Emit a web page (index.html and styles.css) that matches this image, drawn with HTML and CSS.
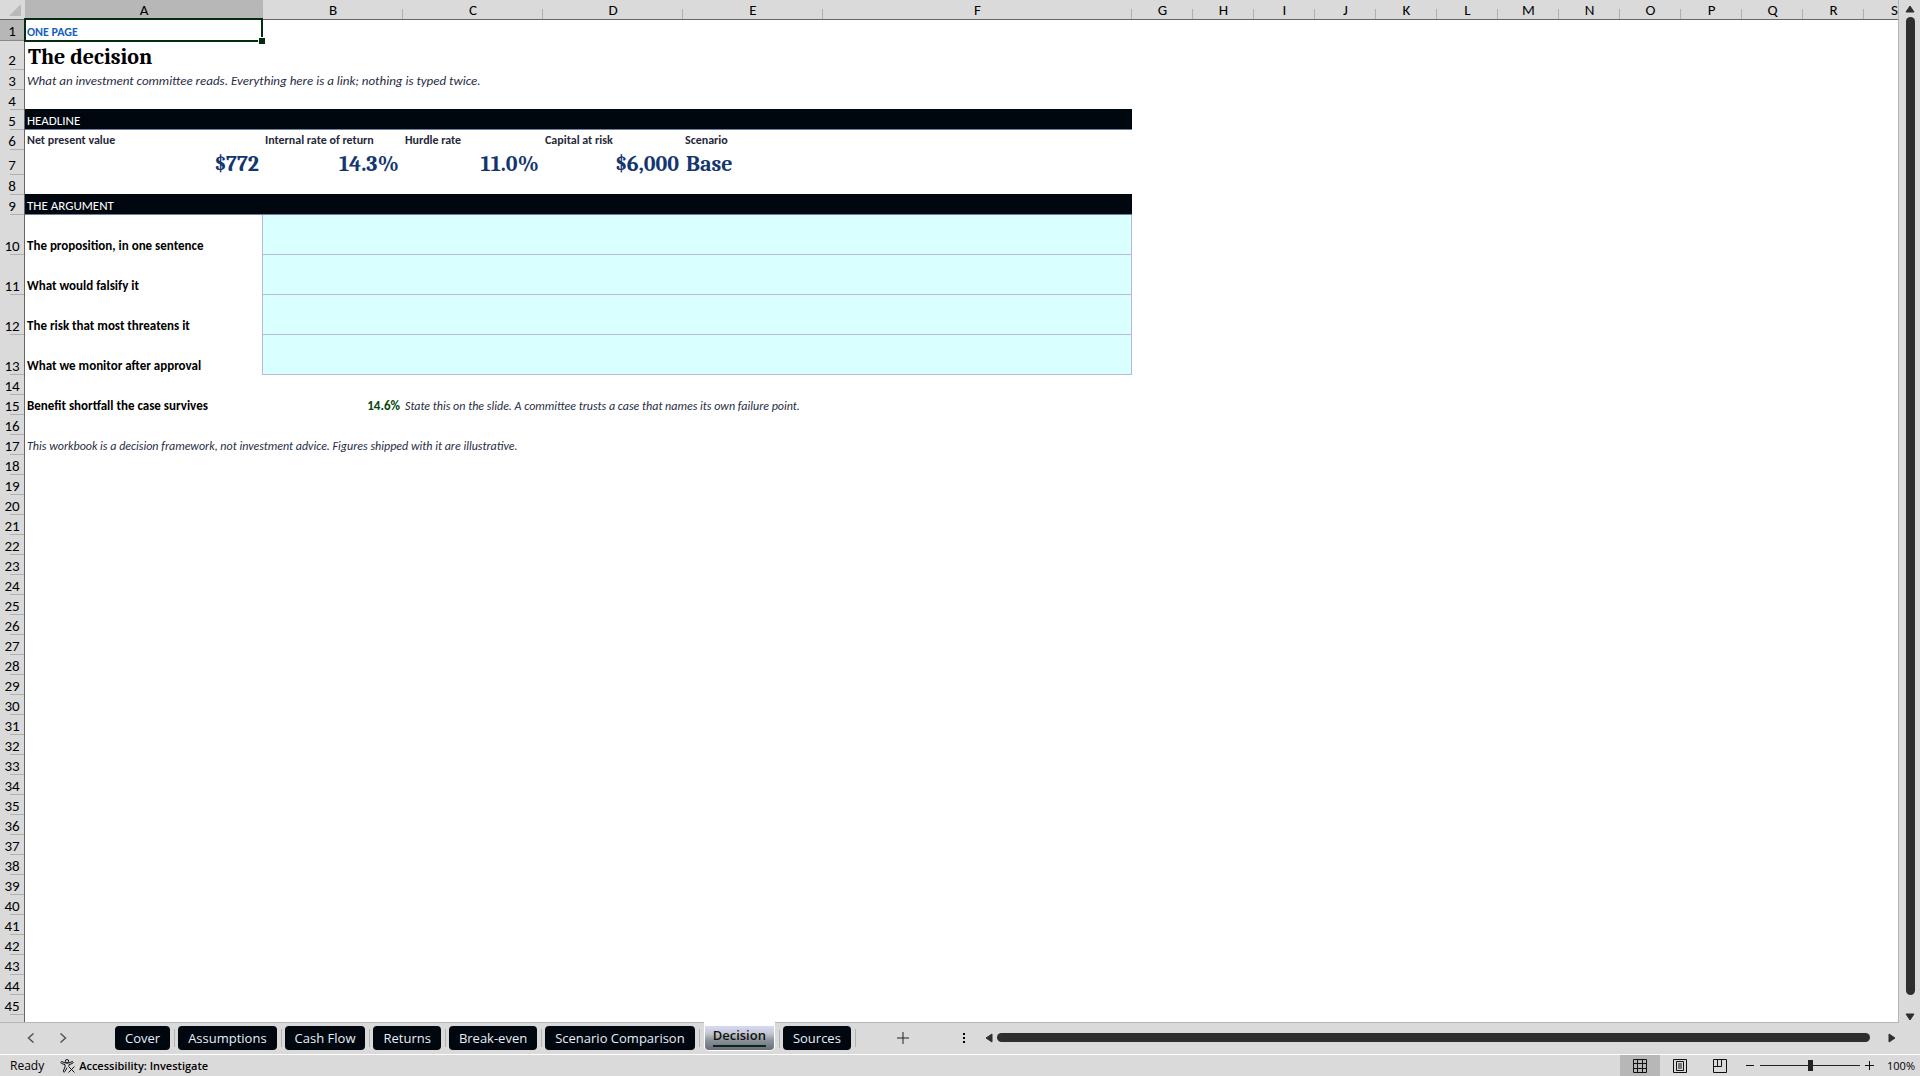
FILE: index.html
```html
<!DOCTYPE html>
<html lang="en">
  <head>
    <meta charset="UTF-8" />
    <meta name="viewport" content="width=device-width, initial-scale=1.0" />
    <title>Decision</title>
    <link rel="stylesheet" href="styles.css">
  </head>
  <body>
    <main class="workspace">
      <div class="grid-area">
        <table class="sheet">
          <colgroup>
            <col class="col-head">
            <col class="col-a">
            <col class="col-b" span="4">
            <col class="col-f">
            <col class="col-default" span="13">
          </colgroup>
          <thead>
            <tr>
              <th class="corner"><svg width="12" height="12" viewBox="0 0 12 12"><path d="M12 0v12H0z" fill="#b9b9b9"/></svg></th>
              <th class="selected">A</th><th>B</th><th>C</th><th>D</th><th>E</th><th>F</th>
              <th>G</th><th>H</th><th>I</th><th>J</th><th>K</th><th>L</th><th>M</th>
              <th>N</th><th>O</th><th>P</th><th>Q</th><th>R</th><th>S</th>
            </tr>
          </thead>
          <tbody>
            <tr class="row-eyebrow"><th class="selected">1</th><td class="eyebrow active-cell">ONE PAGE</td><td colspan="18"></td></tr>
            <tr class="row-title"><th>2</th><td class="title">The decision</td><td colspan="18"></td></tr>
            <tr><th>3</th><td class="note lead" colspan="6">What an investment committee reads. Everything here is a link; nothing is typed twice.</td><td colspan="13"></td></tr>
            <tr><th>4</th><td colspan="19"></td></tr>
            <tr><th>5</th><td class="band" colspan="6">HEADLINE</td><td colspan="13"></td></tr>
            <tr class="row-labels"><th>6</th><td>Net present value</td><td>Internal rate of return</td><td>Hurdle rate</td><td>Capital at risk</td><td>Scenario</td><td colspan="14"></td></tr>
            <tr class="row-figures"><th>7</th><td>$772</td><td>14.3%</td><td>11.0%</td><td>$6,000</td><td class="text-left">Base</td><td colspan="14"></td></tr>
            <tr><th>8</th><td colspan="19"></td></tr>
            <tr><th>9</th><td class="band" colspan="6">THE ARGUMENT</td><td colspan="13"></td></tr>
            <tr class="row-tall"><th>10</th><td class="strong">The proposition, in one sentence</td><td class="entry" colspan="5"></td><td colspan="13"></td></tr>
            <tr class="row-tall"><th>11</th><td class="strong">What would falsify it</td><td class="entry" colspan="5"></td><td colspan="13"></td></tr>
            <tr class="row-tall"><th>12</th><td class="strong">The risk that most threatens it</td><td class="entry" colspan="5"></td><td colspan="13"></td></tr>
            <tr class="row-tall"><th>13</th><td class="strong">What we monitor after approval</td><td class="entry" colspan="5"></td><td colspan="13"></td></tr>
            <tr><th>14</th><td colspan="19"></td></tr>
            <tr><th>15</th><td class="strong">Benefit shortfall the case survives</td><td class="result">14.6%</td><td class="note" colspan="4">State this on the slide. A committee trusts a case that names its own failure point.</td><td colspan="13"></td></tr>
            <tr><th>16</th><td colspan="19"></td></tr>
            <tr><th>17</th><td class="note" colspan="6">This workbook is a decision framework, not investment advice. Figures shipped with it are illustrative.</td><td colspan="13"></td></tr>
            <tr><th>18</th><td colspan="19"></td></tr>
            <tr><th>19</th><td colspan="19"></td></tr>
            <tr><th>20</th><td colspan="19"></td></tr>
            <tr><th>21</th><td colspan="19"></td></tr>
            <tr><th>22</th><td colspan="19"></td></tr>
            <tr><th>23</th><td colspan="19"></td></tr>
            <tr><th>24</th><td colspan="19"></td></tr>
            <tr><th>25</th><td colspan="19"></td></tr>
            <tr><th>26</th><td colspan="19"></td></tr>
            <tr><th>27</th><td colspan="19"></td></tr>
            <tr><th>28</th><td colspan="19"></td></tr>
            <tr><th>29</th><td colspan="19"></td></tr>
            <tr><th>30</th><td colspan="19"></td></tr>
            <tr><th>31</th><td colspan="19"></td></tr>
            <tr><th>32</th><td colspan="19"></td></tr>
            <tr><th>33</th><td colspan="19"></td></tr>
            <tr><th>34</th><td colspan="19"></td></tr>
            <tr><th>35</th><td colspan="19"></td></tr>
            <tr><th>36</th><td colspan="19"></td></tr>
            <tr><th>37</th><td colspan="19"></td></tr>
            <tr><th>38</th><td colspan="19"></td></tr>
            <tr><th>39</th><td colspan="19"></td></tr>
            <tr><th>40</th><td colspan="19"></td></tr>
            <tr><th>41</th><td colspan="19"></td></tr>
            <tr><th>42</th><td colspan="19"></td></tr>
            <tr><th>43</th><td colspan="19"></td></tr>
            <tr><th>44</th><td colspan="19"></td></tr>
            <tr><th>45</th><td colspan="19"></td></tr>
            <tr class="row-last"><th></th><td colspan="19"></td></tr>
          </tbody>
        </table>
      </div>
      <div class="scroll-v">
        <button class="arrow" aria-label="Scroll up"><svg width="10" height="8" viewBox="0 0 10 8"><path d="M5 1 9 7H1z"/></svg></button>
        <div class="thumb"></div>
        <button class="arrow" aria-label="Scroll down"><svg width="10" height="8" viewBox="0 0 10 8"><path d="M5 7 9 1H1z"/></svg></button>
      </div>
    </main>

    <div class="tab-bar">
      <div class="tab-side">
        <div class="tab-nav">
          <button aria-label="Previous sheet"><svg width="8" height="10" viewBox="0 0 8 10"><path d="M6.500 .5 1.500 5l5 4.500"/></svg></button>
          <button aria-label="Next sheet"><svg width="8" height="10" viewBox="0 0 8 10"><path d="M1.500 .5 6.500 5l-5 4.500"/></svg></button>
        </div>
        <nav class="tabs">
          <button class="tab">Cover</button>
          <button class="tab">Assumptions</button>
          <button class="tab">Cash Flow</button>
          <button class="tab">Returns</button>
          <button class="tab">Break-even</button>
          <button class="tab">Scenario Comparison</button>
          <button class="tab active"><span>Decision</span></button>
          <button class="tab">Sources</button>
        </nav>
        <button class="add-tab" aria-label="New sheet"><svg width="12" height="12" viewBox="0 0 12 12"><path d="M6 0v12M0 6h12"/></svg></button>
      </div>
      <div class="scroll-h">
        <svg class="dots" width="4" height="12" viewBox="0 0 4 12"><path d="M1 1h2v2H1zM1 5h2v2H1zM1 9h2v2H1z"/></svg>
        <button class="arrow" aria-label="Scroll left"><svg width="8" height="10" viewBox="0 0 8 10"><path d="M1 5 7 1v8z"/></svg></button>
        <div class="thumb"></div>
        <button class="arrow" aria-label="Scroll right"><svg width="8" height="10" viewBox="0 0 8 10"><path d="M7 5 1 1v8z"/></svg></button>
      </div>
    </div>

    <footer class="status-bar">
      <span class="ready">Ready</span>
      <button class="accessibility">
        <svg width="16" height="14" viewBox="0 0 16 14"><circle cx="7" cy="2.200" r="1.700"/><path d="M1.500 2.500C.5 3 .8 4.200 1.700 4.500L5 5.600v2.500L3.300 12c-.2 1 1 1.500 1.500.7L7 8.800M12.500 2.500c1 .5.700 1.700-.2 2L9 5.600v1.600M1.500 2.500 5.500 4h3l4-1.500M8.500 7.500l6 6M14.500 7.500l-6 6"/></svg>
        Accessibility: Investigate
      </button>
      <div class="views">
        <button class="current" aria-label="Normal view"><svg width="14" height="14" viewBox="0 0 14 14"><path d="M.5.5h13v13H.5zM4.500.5v13M9.500.5v13M.5 4.500h13M.5 9.500h13"/></svg></button>
        <button aria-label="Page layout view"><svg width="14" height="14" viewBox="0 0 14 14"><path d="M.5.5h13v13H.5zM3.500 2.500h7v9h-7zM5 5h4M5 7h4M5 9h4"/></svg></button>
        <button aria-label="Page break view"><svg width="14" height="14" viewBox="0 0 14 14"><path d="M.5.5h13v13H.5zM4.500.5v7M8.500.5v7M.5 7.500h8"/></svg></button>
      </div>
      <div class="zoom">
        <button aria-label="Zoom out"><svg width="9" height="9" viewBox="0 0 9 9"><path d="M0 4.500h8"/></svg></button>
        <input type="range" min="0" max="200" value="100" aria-label="Zoom">
        <button aria-label="Zoom in"><svg width="9" height="9" viewBox="0 0 9 9"><path d="M0 4.500h9M4.500 0v9"/></svg></button>
        <span class="percent">100%</span>
      </div>
    </footer>
  </body>
</html>
```

FILE: styles.css
```css
* {
  margin: 0;
  padding: 0;
  box-sizing: border-box;
}

body {
  height: 100vh;
  display: flex;
  flex-direction: column;
  overflow: hidden;
  font-family: "Open Sans", "Segoe UI", sans-serif;
  background: #dadada;
  color: #000;
}

button {
  border: none;
  background: none;
  font: inherit;
  color: inherit;
  cursor: pointer;
}

svg {
  display: block;
}

/* Sheet */
.workspace {
  flex: 1;
  min-height: 0;
  display: flex;
}

.grid-area {
  flex: 1;
  min-width: 0;
  overflow: hidden;
  border-right: 1px solid #b5b5b5;
  border-bottom: 1px solid #b5b5b5;
  background: #fff;
}

.sheet {
  width: 1925px;
  table-layout: fixed;
  border-collapse: separate;
  border-spacing: 0;
  font-family: Calibri, Lato, sans-serif;
  font-size: 13px;
  line-height: 16px;
}

.col-head {
  width: 25px;
}

.col-a {
  width: 238px;
}

.col-b {
  width: 140px;
}

.col-f {
  width: 309px;
}

.col-default {
  width: 61px;
}

.sheet tr {
  height: 20px;
}

.sheet th {
  background: #dadada;
  font-size: 15px;
  font-weight: 400;
}

.sheet thead th {
  border-bottom: 1px solid #666;
  background: linear-gradient(#b0b0b0, #b0b0b0) right bottom / 1px 10px no-repeat #dadada;
}

.sheet tbody th {
  padding-bottom: 1px;
  border-right: 1px solid #666;
  background: linear-gradient(#b0b0b0, #b0b0b0) right bottom / 14px 1px no-repeat #dadada;
  vertical-align: bottom;
}

.sheet thead .selected,
.sheet tbody .selected {
  background-color: #b7b7b7;
}

.sheet tbody .selected {
  border-bottom: 1px solid #888;
}

.sheet thead .corner {
  background: #dadada;
}

.corner svg {
  margin-left: 9px;
}

.sheet td {
  padding: 0 3px 1px 2px;
  vertical-align: bottom;
  white-space: nowrap;
}

.sheet .row-eyebrow {
  height: 21px;
}

.sheet .row-title {
  height: 29px;
}

.sheet .row-figures {
  height: 25px;
}

.sheet .row-title th,
.sheet .row-figures th {
  padding-bottom: 2px;
}

.sheet .row-tall {
  height: 40px;
}

.sheet .row-last th {
  background: #dadada;
}

.eyebrow {
  color: #1560bd;
  font-weight: 700;
  font-size: 12px;
}

.active-cell {
  position: relative;
}

.active-cell::before {
  content: "";
  position: absolute;
  inset: -2px 0 -1px -1px;
  border: 2px solid #042c12;
}

.active-cell::after {
  content: "";
  position: absolute;
  right: -2px;
  bottom: -3px;
  width: 6px;
  height: 6px;
  border: 1px solid #fff;
  border-width: 1px 0 0 1px;
  background: #042c12;
}

.title,
.row-figures td {
  font-family: Cambria, "Liberation Serif", serif;
  font-weight: 700;
}

.sheet .title {
  padding: 0 0 0 3px;
  font-size: 22px;
  line-height: 26px;
}

.note {
  color: #1f2d44;
  font-style: italic;
  font-size: 12px;
}

.lead {
  font-size: 13px;
}

.sheet .band {
  padding-bottom: 0;
  background: #00070f;
  border-bottom: 1px solid #6d7f99;
  box-shadow: 0 -1px #00070f;
  color: #fff;
}

.sheet .row-labels td {
  padding-bottom: 2px;
  color: #1f2937;
  font-size: 12px;
  font-weight: 700;
}

.sheet .row-figures td {
  padding: 0 4px 0 3px;
  color: #14366f;
  font-size: 22px;
  line-height: 22px;
  text-align: right;
}

.sheet .row-figures .text-left {
  text-align: left;
}

.strong {
  font-weight: 700;
}

.entry {
  background: #d9ffff;
  border: 1px solid #b8b8dc;
  border-width: 0 1px 1px 0;
  box-shadow: -1px 0 #b8b8dc;
}

.result {
  color: #04470a;
  font-weight: 700;
  text-align: right;
}

/* Scroll bars */
.thumb {
  flex: 1;
  border-radius: 5px;
  background: #2e2e2e;
}

.arrow {
  fill: #2e2e2e;
  stroke: #2e2e2e;
  stroke-linejoin: round;
}

.scroll-v {
  width: 21px;
  padding: 5px 5px 2px 6px;
  display: flex;
  flex-direction: column;
  align-items: center;
  gap: 4px;
}

.scroll-v .thumb {
  width: 9px;
  margin-bottom: 14px;
}

.scroll-h {
  flex: 1;
  display: flex;
  align-items: center;
  gap: 4px;
  padding: 0 24px 2px 2px;
}

.scroll-h .thumb {
  height: 9px;
  margin-right: 14px;
}

.dots {
  margin-right: 15px;
}

/* Sheet tabs */
.tab-bar {
  height: 32px;
  display: flex;
  border-bottom: 1px solid #fff;
}

.tab-side {
  flex: 0 0 50%;
  display: flex;
  align-items: center;
}

.tab-nav {
  width: 115px;
  padding: 0 0 2px 27px;
  display: flex;
  gap: 24px;
}

.tab-nav svg {
  fill: none;
  stroke: #555;
  stroke-width: 1.5;
}

.tabs {
  align-self: stretch;
  display: flex;
  align-items: flex-start;
}

.tab {
  position: relative;
  height: 24px;
  margin: 3px 8px 0 0;
  padding: 0 10px;
  border-radius: 4px;
  background: #00070f;
  color: #e8eef8;
  font-size: 13px;
  line-height: 24px;
  white-space: nowrap;
}

.tab::after {
  content: "";
  position: absolute;
  top: 3px;
  right: -5px;
  width: 1px;
  height: 18px;
  background: #b3b3b3;
}

.tab.active {
  height: 29px;
  margin-top: -1px;
  margin-left: 1px;
  padding: 4px 1px 1px;
  border-radius: 0 0 5px 5px;
  background: #fff;
  color: #111;
  font-weight: 600;
}

.tab.active span {
  display: block;
  height: 24px;
  padding: 0 8px;
  border-radius: 0 0 4px 4px;
  background: linear-gradient(#d8d8fa, #c4c8d0 30%, #8a9299 60%, #6b6b7c);
  line-height: 19px;
}

.tab.active span::after {
  content: "";
  display: block;
  height: 2px;
  background: #042c12;
}

.tab.active::after {
  top: 8px;
}

.add-tab {
  margin: 0 0 2px 38px;
}

.add-tab svg {
  fill: none;
  stroke: #222;
}

/* Status bar */
.status-bar {
  height: 21px;
  display: flex;
  align-items: center;
  padding: 0 5px 0 10px;
  font-size: 12px;
  line-height: 20px;
}

.accessibility {
  display: flex;
  align-items: center;
  gap: 3px;
  margin-left: 16px;
  font-size: 11px;
  font-weight: 600;
}

.status-bar svg {
  fill: none;
  stroke: #111;
}

.views {
  align-self: stretch;
  display: flex;
  margin-left: auto;
}

.views button {
  width: 40px;
  display: flex;
  align-items: center;
  justify-content: center;
}

.views .current {
  background: #b7b7b7;
}

.zoom {
  display: flex;
  align-items: center;
  gap: 5px;
  margin-left: 6px;
}

.zoom input {
  width: 100px;
  height: 11px;
  appearance: none;
  background: linear-gradient(#222, #222) center / 100% 1px no-repeat;
}

.zoom input::-webkit-slider-thumb {
  appearance: none;
  width: 5px;
  height: 11px;
  background: #222;
}

.percent {
  margin-left: 8px;
  font-size: 11px;
}
```
